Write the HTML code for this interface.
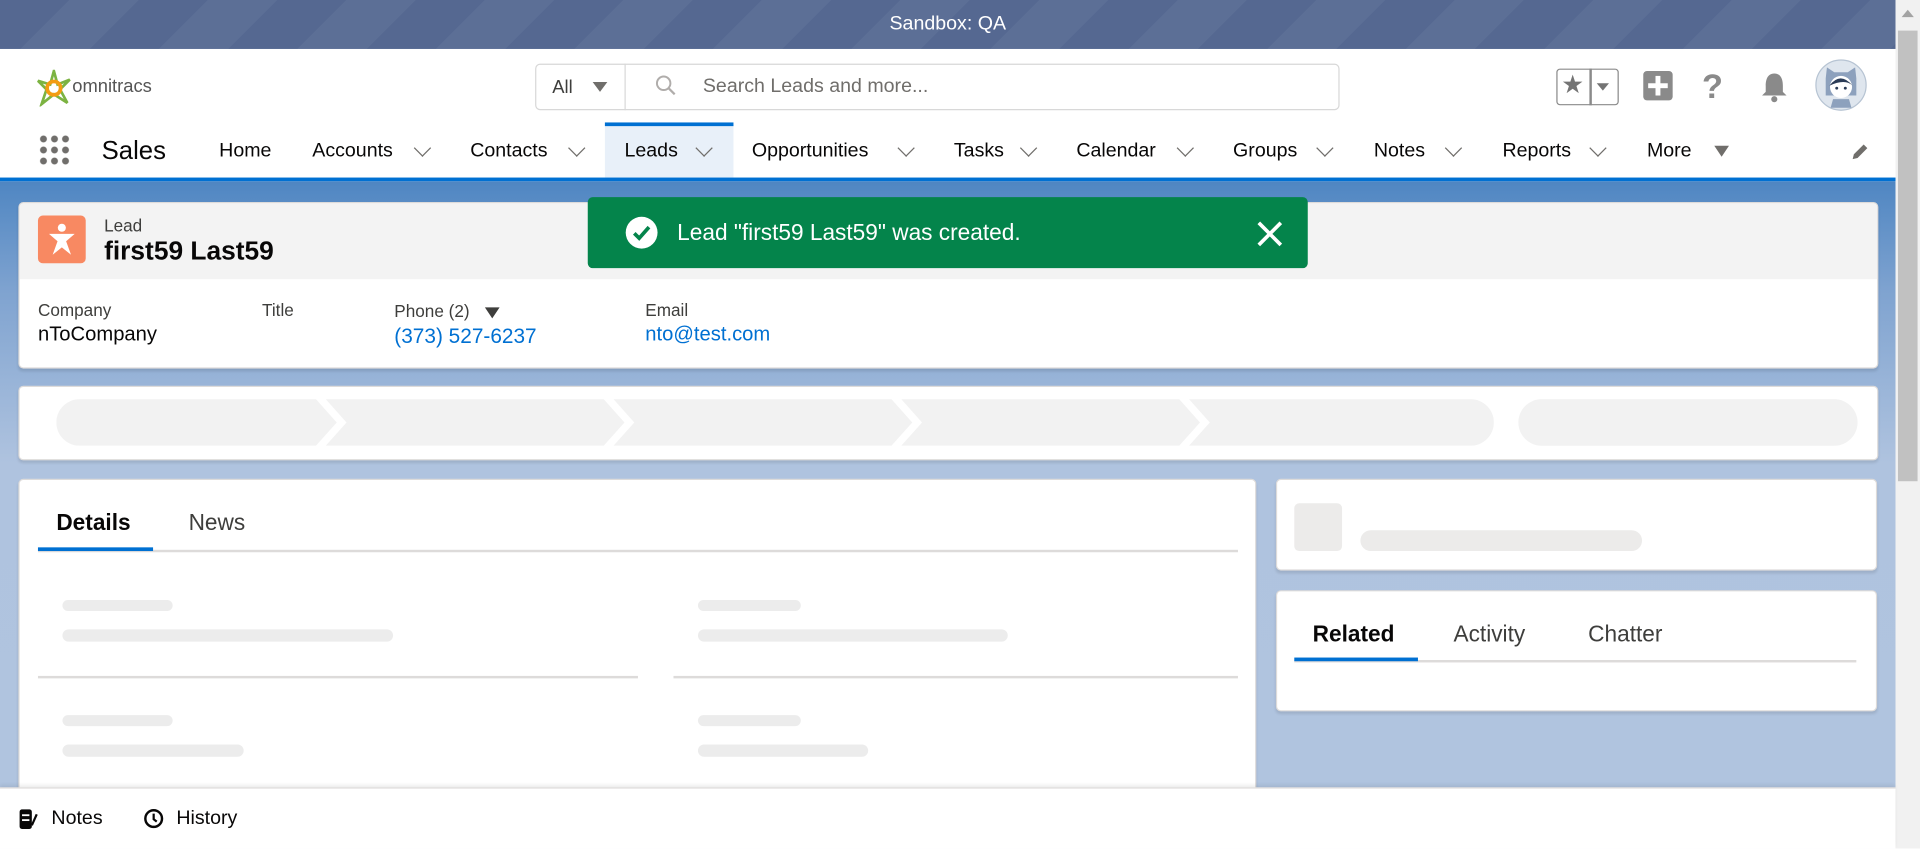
<!DOCTYPE html>
<html><head><meta charset="utf-8"><style>
html,body{margin:0;padding:0;width:1920px;height:849px;overflow:hidden;background:#fff}
#s{position:absolute;left:0;top:0;width:1568px;height:693px;transform:scale(1.22449);transform-origin:0 0;font-family:"Liberation Sans",sans-serif;color:#080707;overflow:hidden}
.a{position:absolute}
.sb{left:0;top:0;width:1548px;height:40px;background:repeating-linear-gradient(135deg,#556891 0 40px,#5c6f96 40px 80px);color:#fff;font-size:16px;text-align:center;line-height:40px}
.hdr{left:0;top:40px;width:1548px;height:105px;background:#fff}
.nav{font-size:16px;color:#080707;top:115px}
.chev{top:116px;width:9px;height:9px;border-right:1.8px solid #706e6b;border-bottom:1.8px solid #706e6b;transform:rotate(45deg)}
.card{background:#fff;border-radius:4px;box-shadow:0 2px 2px rgba(0,0,0,.1);border:1px solid #dddbda}
.sk{background:#ececec;border-radius:8px}
</style></head><body><div id="s">
<div class="a" style="left:0;top:148px;width:1548px;height:545px;background:linear-gradient(180deg,#4f86c2 0px,#7fa3d0 90px,#afc3df 230px,#b0c4df 100%)"></div>
<div class="a sb">Sandbox: QA</div>
<div class="a hdr"></div>
<div class="a" style="left:1548px;top:0;width:20px;height:693px;background:#f1f1f1"></div>
<div class="a" style="left:1550px;top:25px;width:16px;height:368px;background:#c1c1c1"></div>
<div class="a" style="left:1553px;top:8px;width:0;height:0;border-left:5px solid transparent;border-right:5px solid transparent;border-bottom:6px solid #a3a3a3"></div>
<svg class="a" style="left:30px;top:57px" width="28" height="30" viewBox="0 0 28 30"><path d="M14 1 L17 12 L27 8 L19 16 L25 27 L14 20 L4 28 L8 16 L1 9 L11 12 Z" fill="none" stroke="#7cb342" stroke-width="2.2"/><circle cx="14" cy="15" r="5.5" fill="none" stroke="#f39c12" stroke-width="3"/></svg>
<div class="a" style="left:59px;top:62px;font-size:15px;color:#555">omnitracs</div>
<div class="a" style="left:437px;top:52px;width:655px;height:36px;border:1px solid #d8d8d8;border-radius:4px;background:#fff"></div>
<div class="a" style="left:510px;top:52px;width:1px;height:38px;background:#d8d8d8"></div>
<div class="a" style="left:451px;top:63px;font-size:15px;color:#3e3e3c">All</div>
<div class="a" style="left:484px;top:67px;width:0;height:0;border-left:6px solid transparent;border-right:6px solid transparent;border-top:8px solid #706e6b"></div>
<svg class="a" style="left:535px;top:61px" width="18" height="18" viewBox="0 0 18 18"><circle cx="7" cy="7" r="5.5" fill="none" stroke="#b0adab" stroke-width="1.6"/><path d="M11 11 L16 16" stroke="#b0adab" stroke-width="1.8"/></svg>
<div class="a" style="left:574px;top:62px;font-size:16px;color:#706e6b">Search Leads and more...</div>
<div class="a" style="left:1271px;top:56px;width:49px;height:28px;border:1.5px solid #8a8a8a;border-radius:3px"></div>
<div class="a" style="left:1298px;top:56px;width:1.5px;height:30px;background:#8a8a8a"></div>
<div class="a" style="left:1275px;top:57px;font-size:21px;color:#747474">★</div>
<div class="a" style="left:1304px;top:68px;width:0;height:0;border-left:5px solid transparent;border-right:5px solid transparent;border-top:6px solid #747474"></div>
<div class="a" style="left:1342px;top:58px;width:24px;height:24px;background:#8a8a8a;border-radius:3px"></div>
<div class="a" style="left:1352px;top:62px;width:4px;height:16px;background:#fff"></div>
<div class="a" style="left:1346px;top:68px;width:16px;height:4px;background:#fff"></div>
<div class="a" style="left:1390px;top:55px;font-size:28px;color:#8a8a8a;font-weight:bold">?</div>
<svg class="a" style="left:1437px;top:58px" width="24" height="26" viewBox="0 0 24 26"><path d="M12 2 C6 2 5 8 5 12 L5 17 L2 20 L22 20 L19 17 L19 12 C19 8 18 2 12 2Z" fill="#8a8a8a"/><circle cx="12" cy="23" r="2.5" fill="#8a8a8a"/></svg>
<svg class="a" style="left:1482px;top:48px" width="43" height="43" viewBox="0 0 43 43"><circle cx="21.5" cy="21.5" r="20.5" fill="#dfe6ee" stroke="#b7c4d3"/><path d="M9 16 L10 7 L16 11 L27 11 L33 7 L34 16 L34 30 L9 30Z" fill="#8da1bd"/><circle cx="21.5" cy="23" r="9" fill="#fff"/><path d="M12 22 Q21 10 31 22 Q25 16 12 22Z" fill="#2a3b56"/><circle cx="18" cy="24" r="1.2" fill="#2a3b56"/><circle cx="25" cy="24" r="1.2" fill="#2a3b56"/><path d="M13 40 L15 33 L28 33 L30 40Z" fill="#8da1bd"/></svg>
<div class="a" style="left:31px;top:109px;width:26px;height:26px;background:radial-gradient(circle,#706e6b 2.6px,transparent 3px) 0 0/9px 9px"></div>
<div class="a" style="left:83px;top:112px;font-size:21px;color:#080707">Sales</div>
<div class="a" style="left:494px;top:100px;width:105px;height:45px;background:#e8f0f9"></div>
<div class="a" style="left:494px;top:100px;width:105px;height:3px;background:#0070d2"></div>
<div class="a nav" style="left:179px">Home</div>
<div class="a nav" style="left:255px">Accounts</div><div class="a chev" style="left:340px"></div>
<div class="a nav" style="left:384px">Contacts</div><div class="a chev" style="left:466px"></div>
<div class="a nav" style="left:510px">Leads</div><div class="a chev" style="left:570px"></div>
<div class="a nav" style="left:614px">Opportunities</div><div class="a chev" style="left:735px"></div>
<div class="a nav" style="left:779px">Tasks</div><div class="a chev" style="left:835px"></div>
<div class="a nav" style="left:879px">Calendar</div><div class="a chev" style="left:963px"></div>
<div class="a nav" style="left:1007px">Groups</div><div class="a chev" style="left:1077px"></div>
<div class="a nav" style="left:1122px">Notes</div><div class="a chev" style="left:1182px"></div>
<div class="a nav" style="left:1227px">Reports</div><div class="a chev" style="left:1300px"></div>
<div class="a nav" style="left:1345px">More</div>
<div class="a" style="left:1400px;top:119px;width:0;height:0;border-left:6px solid transparent;border-right:6px solid transparent;border-top:9px solid #706e6b"></div>
<svg class="a" style="left:1510px;top:115px" width="18" height="18" viewBox="0 0 18 18"><path d="M3 15 L4 11 L12 3 L15 6 L7 14Z" fill="#706e6b"/></svg>
<div class="a" style="left:0;top:145px;width:1548px;height:3px;background:#0070d2"></div>
<div class="a card" style="left:15px;top:165px;width:1517px;height:134px;overflow:hidden"><div style="height:62px;background:#f3f3f3"></div></div>
<div class="a" style="left:31px;top:176px;width:39px;height:39px;background:#f88962;border-radius:4px"></div>
<svg class="a" style="left:37px;top:181px" width="27" height="29" viewBox="0 0 27 29"><circle cx="13.5" cy="5" r="3.3" fill="#fff"/><path d="M3 10 L24 10 L17 16 L21 27 L13.5 21 L6 27 L10 16Z" fill="#fff"/></svg>
<div class="a" style="left:85px;top:176px;font-size:14px;color:#3e3e3c">Lead</div>
<div class="a" style="left:85px;top:193px;font-size:21.5px;font-weight:bold">first59 Last59</div>
<div class="a" style="left:31px;top:245px;font-size:14px;color:#3e3e3c">Company</div>
<div class="a" style="left:31px;top:264px;font-size:16.5px">nToCompany</div>
<div class="a" style="left:214px;top:245px;font-size:14px;color:#3e3e3c">Title</div>
<div class="a" style="left:322px;top:246px;font-size:14px;color:#3e3e3c">Phone (2)</div>
<div class="a" style="left:396px;top:251px;width:0;height:0;border-left:6px solid transparent;border-right:6px solid transparent;border-top:9px solid #3e3e3c"></div>
<div class="a" style="left:322px;top:265px;font-size:17px;color:#0070d2">(373) 527-6237</div>
<div class="a" style="left:527px;top:245px;font-size:14px;color:#3e3e3c">Email</div>
<div class="a" style="left:527px;top:264px;font-size:16.5px;color:#0070d2">nto@test.com</div>
<div class="a" style="left:480px;top:161px;width:588px;height:58px;background:#04844b;border-radius:4px"></div>
<svg class="a" style="left:510px;top:176px" width="28" height="28" viewBox="0 0 28 28"><circle cx="14" cy="14" r="13" fill="#fff"/><path d="M8 14.5 L12 18.5 L20 9.5" fill="none" stroke="#04844b" stroke-width="3"/></svg>
<div class="a" style="left:553px;top:179px;font-size:18.5px;color:#fff">Lead "first59 Last59" was created.</div>
<svg class="a" style="left:1026px;top:180px" width="22" height="22" viewBox="0 0 22 22"><path d="M2 2 L20 20 M20 2 L2 20" stroke="#fff" stroke-width="3"/></svg>
<div class="a card" style="left:15px;top:315px;width:1517px;height:59px"></div>
<svg class="a" style="left:46px;top:326px" width="1174" height="38" viewBox="0 0 1174 38"><g fill="#f2f2f2">
<path d="M19 0 L212 0 L229 19 L212 38 L19 38 A19 19 0 0 1 19 0Z"/>
<path d="M220 0 L447 0 L464 19 L447 38 L220 38 L237 19Z"/>
<path d="M455 0 L682 0 L699 19 L682 38 L455 38 L472 19Z"/>
<path d="M690 0 L917 0 L934 19 L917 38 L690 38 L707 19Z"/>
<path d="M925 0 L1155 0 A19 19 0 0 1 1155 38 L925 38 L942 19Z"/></g></svg>
<div class="a" style="left:1240px;top:326px;width:277px;height:38px;background:#f2f2f2;border-radius:19px"></div>
<div class="a card" style="left:15px;top:391px;width:1009px;height:270px"></div>
<div class="a" style="left:46px;top:416px;font-size:18.5px;font-weight:bold">Details</div>
<div class="a" style="left:154px;top:416px;font-size:18.5px;color:#3e3e3c">News</div>
<div class="a" style="left:31px;top:449px;width:980px;height:1.5px;background:#dddbda"></div>
<div class="a" style="left:31px;top:447px;width:94px;height:3px;background:#0070d2"></div>
<div class="a sk" style="left:51px;top:490px;width:90px;height:9px"></div>
<div class="a sk" style="left:51px;top:514px;width:270px;height:10px"></div>
<div class="a sk" style="left:570px;top:490px;width:84px;height:9px"></div>
<div class="a sk" style="left:570px;top:514px;width:253px;height:10px"></div>
<div class="a" style="left:31px;top:552px;width:490px;height:1.5px;background:#dddbda"></div>
<div class="a" style="left:550px;top:552px;width:461px;height:1.5px;background:#dddbda"></div>
<div class="a sk" style="left:51px;top:584px;width:90px;height:9px"></div>
<div class="a sk" style="left:51px;top:608px;width:148px;height:10px"></div>
<div class="a sk" style="left:570px;top:584px;width:84px;height:9px"></div>
<div class="a sk" style="left:570px;top:608px;width:139px;height:10px"></div>
<div class="a card" style="left:1042px;top:391px;width:489px;height:73px"></div>
<div class="a" style="left:1057px;top:411px;width:39px;height:39px;background:#ecebea;border-radius:4px"></div>
<div class="a" style="left:1111px;top:433px;width:230px;height:17px;background:#ecebea;border-radius:9px"></div>
<div class="a card" style="left:1042px;top:482px;width:489px;height:97px"></div>
<div class="a" style="left:1072px;top:507px;font-size:18.5px;font-weight:bold">Related</div>
<div class="a" style="left:1187px;top:507px;font-size:18.5px;color:#3e3e3c">Activity</div>
<div class="a" style="left:1297px;top:507px;font-size:18.5px;color:#3e3e3c">Chatter</div>
<div class="a" style="left:1057px;top:539px;width:459px;height:1.5px;background:#dddbda"></div>
<div class="a" style="left:1057px;top:537px;width:101px;height:3px;background:#0070d2"></div>
<div class="a" style="left:0;top:643px;width:1548px;height:50px;background:#fff;border-top:1px solid #dddbda;box-shadow:0 -2px 3px rgba(0,0,0,.08)"></div>
<svg class="a" style="left:14px;top:660px" width="18" height="18" viewBox="0 0 18 18"><rect x="2" y="1" width="10" height="16" rx="2" fill="#080707"/><rect x="4" y="5" width="6" height="1.5" fill="#fff"/><rect x="4" y="9" width="6" height="1.5" fill="#fff"/><path d="M12 14 L16 5" stroke="#080707" stroke-width="1.8"/></svg>
<div class="a" style="left:42px;top:660px;font-size:16px;color:#080707">Notes</div>
<svg class="a" style="left:117px;top:660px" width="17" height="17" viewBox="0 0 17 17"><circle cx="8.5" cy="8.5" r="6.8" fill="none" stroke="#080707" stroke-width="2"/><path d="M8.5 4.5 L8.5 9 L11 11" fill="none" stroke="#080707" stroke-width="1.8"/></svg>
<div class="a" style="left:144px;top:660px;font-size:16px;color:#080707">History</div>
</div></body></html>
